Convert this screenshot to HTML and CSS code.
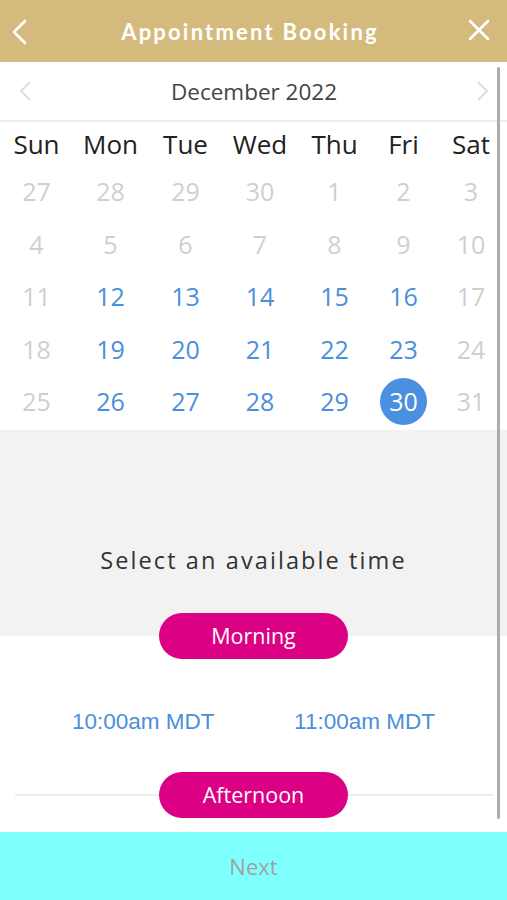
FILE: index.html
```html
<!DOCTYPE html>
<html>
<head>
<meta charset="utf-8">
<link rel="stylesheet" href="styles.css">
</head>
<body>
<div class="app">
  <header class="topbar">
    <svg class="ico back" width="20" height="30" viewBox="0 0 20 30"><path d="M13 4 L2 15 L13 26" fill="none" stroke="#fff" stroke-width="2.6" stroke-linecap="round" stroke-linejoin="round"/></svg>
    <h1 class="title">Appointment Booking</h1>
    <svg class="ico close" width="22" height="22" viewBox="0 0 22 22"><path d="M2 2 L20 20 M20 2 L2 20" fill="none" stroke="#fff" stroke-width="2.6" stroke-linecap="round"/></svg>
  </header>
  <main class="scroll">
    <div class="monthnav">
      <svg class="navarrow" width="14" height="22" viewBox="0 0 14 22"><path d="M11 2 L2 11 L11 20" fill="none" stroke="#dcdcdc" stroke-width="1.8"/></svg>
      <span class="month">December 2022</span>
      <svg class="navarrow" width="14" height="22" viewBox="0 0 14 22"><path d="M3 2 L12 11 L3 20" fill="none" stroke="#dcdcdc" stroke-width="1.8"/></svg>
    </div>
    <div class="cal">
      <div class="wd">Sun</div><div class="wd">Mon</div><div class="wd">Tue</div><div class="wd">Wed</div><div class="wd">Thu</div><div class="wd">Fri</div><div class="wd">Sat</div>
      <div class="d off">27</div><div class="d off">28</div><div class="d off">29</div><div class="d off">30</div><div class="d off">1</div><div class="d off">2</div><div class="d off">3</div>
      <div class="d off">4</div><div class="d off">5</div><div class="d off">6</div><div class="d off">7</div><div class="d off">8</div><div class="d off">9</div><div class="d off">10</div>
      <div class="d off">11</div><div class="d on">12</div><div class="d on">13</div><div class="d on">14</div><div class="d on">15</div><div class="d on">16</div><div class="d off">17</div>
      <div class="d off">18</div><div class="d on">19</div><div class="d on">20</div><div class="d on">21</div><div class="d on">22</div><div class="d on">23</div><div class="d off">24</div>
      <div class="d off">25</div><div class="d on">26</div><div class="d on">27</div><div class="d on">28</div><div class="d on">29</div><div class="d sel"><span>30</span></div><div class="d off">31</div>
    </div>
    <section class="prompt">
      <p class="prompt-text">Select an available time</p>
    </section>
    <div class="period first"><span class="pill">Morning</span></div>
    <div class="times">
      <span class="time">10:00am MDT</span>
      <span class="time">11:00am MDT</span>
    </div>
    <div class="period lined"><span class="pill">Afternoon</span></div>
    <div class="scrollbar"></div>
  </main>
  <footer class="nextbar">Next</footer>
</div>
</body>
</html>
```
FILE: styles.css
```css
* { box-sizing: border-box; }
html, body { margin: 0; padding: 0; }
body { font-family: "Open Sans", "DejaVu Sans", sans-serif; background: #fff; }
.app { width: 507px; height: 900px; display: flex; flex-direction: column; overflow: hidden; }

.topbar {
  height: 62px; background: #d4bb7d; display: flex; align-items: center;
  justify-content: space-between; padding: 0 17px 0 12px; flex: none;
}
.title {
  margin: 0; color: #fff; font-family: "Lato", sans-serif; font-weight: 700;
  font-size: 22px; letter-spacing: 2.2px;
}
.ico { display: block; }
.back { margin-top: 1px; }
.close { margin-top: -2px; }

.scroll { position: relative; flex: 1; display: flex; flex-direction: column; }
.monthnav {
  height: 60px; display: flex; align-items: center; justify-content: space-between;
  padding: 0 18px 0 19px; border-bottom: 2px solid #ececec;
}
.month { font-size: 22.5px; color: #444; }

.cal {
  display: grid;
  grid-template-columns: 73px 75px 75px 74px 75px 63px 72px;
  grid-auto-rows: 52.5px;
  grid-template-rows: 43px;
}
.wd, .d { display: flex; align-items: center; justify-content: center; font-size: 25px; }
.wd { color: #222; font-size: 26px; }
.off { color: #cfcfcf; }
.on { color: #4a8fdb; }
.sel span {
  width: 47px; height: 47px; border-radius: 50%; background: #4a8fe0; color: #fff;
  display: flex; align-items: center; justify-content: center;
}

.prompt {
  background: #f2f2f2; height: 206px; display: flex; align-items: flex-end;
  justify-content: center; margin-top: 2px;
}
.prompt-text { margin: 0 0 60px; font-size: 23.5px; color: #333; letter-spacing: 2.1px; }

.period { position: relative; display: flex; justify-content: center; height: 46px; }
.period.first { margin-top: -23px; }
.pill {
  position: relative; width: 189px; height: 46px; border-radius: 23px; background: #dc0084;
  color: #fff; font-size: 21.5px; display: flex; align-items: center; justify-content: center;
}
.period.lined::before {
  content: ""; position: absolute; left: 15px; right: 14px; top: 22px; height: 2px; background: #ececec;
}
.times {
  display: flex; justify-content: space-between; height: 113px; align-items: center;
  padding: 14px 72px 0 72px;
}
.time { font-family: "Liberation Sans", Arial, sans-serif; font-size: 22.5px; color: #4a8fdb; }

.scrollbar {
  position: absolute; right: 7px; top: 5px; width: 3px; height: 752px; background: #acacac; border-radius: 2px;
}
.nextbar {
  height: 68px; flex: none; background: #80ffff; color: #a2a2a2; font-size: 22px;
  display: flex; align-items: center; justify-content: center; margin-top: auto;
}
```
